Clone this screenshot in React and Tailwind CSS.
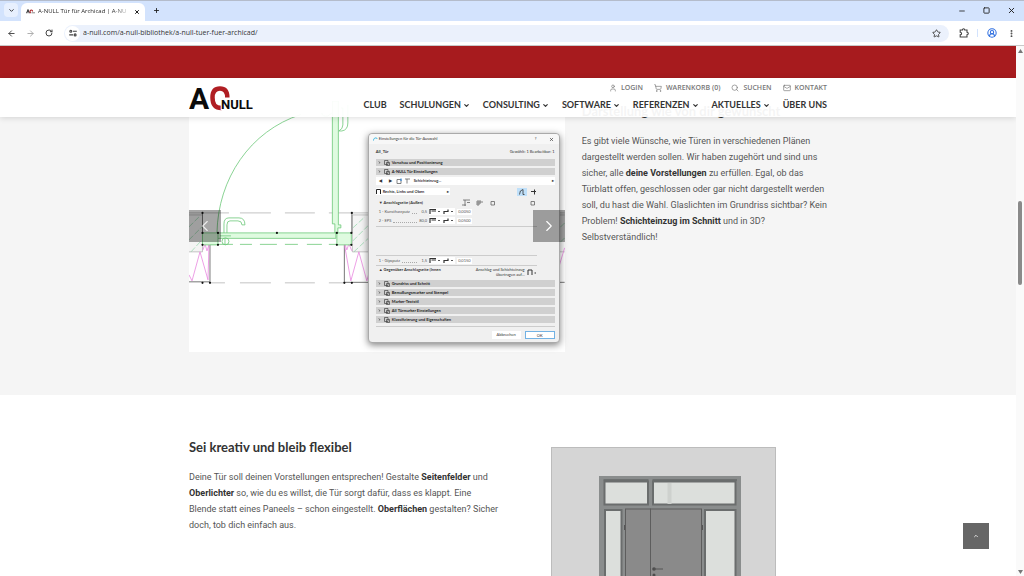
import {
  ArrowLeft,
  ArrowRight,
  ChevronDown,
  ChevronLeft,
  ChevronRight,
  ChevronUp,
  CircleUserRound,
  EllipsisVertical,
  Mail,
  Minus,
  Plus,
  RotateCw,
  Search,
  ShoppingCart,
  Square,
  Star,
  User,
  X,
} from "lucide-react";

const topLinks = [
  { label: "Login", icon: User },
  { label: "Warenkorb (0)", icon: ShoppingCart },
  { label: "Suchen", icon: Search },
  { label: "Kontakt", icon: Mail },
];

const mainLinks = [
  { label: "Club" },
  { label: "Schulungen", menu: true },
  { label: "Consulting", menu: true },
  { label: "Software", menu: true },
  { label: "Referenzen", menu: true },
  { label: "Aktuelles", menu: true },
  { label: "Über uns" },
];

const lowerPanels = [
  "Grundriss und Schnitt",
  "Bemaßungsmarker und Stempel",
  "Marker-Textstil",
  "AII Türmarker Einstellungen",
  "Klassifizierung und Eigenschaften",
];

function TabStrip() {
  return (
    <div className="flex h-[21px] items-end border-t border-[#b4bccb] bg-[#d3e3fd] pl-1 text-[#1f1f1f]">
      <button
        aria-label="Tabs durchsuchen"
        className="mb-1 flex h-3.5 w-3.5 items-center justify-center rounded bg-[#e8f0fe]"
      >
        <ChevronDown size={7} strokeWidth={3} />
      </button>
      <div className="ml-[3px] flex h-[18px] w-[124px] items-center rounded-t-md bg-white pr-1.5 pb-px pl-[5px]">
        <svg width="9" height="5" viewBox="0 0 9 5" className="shrink-0">
          <path d="M0.6 4.2 2 0.9 3.4 4.2" stroke="#333" strokeWidth="1.1" fill="none" />
          <path d="M4.6 4.2C3.6 3 3.9 1 5.2 1S6.6 2 6.6 2.6" stroke="#a71c20" strokeWidth="1.1" fill="none" />
          <path d="M5.5 3.8H9" stroke="#888" strokeWidth="1" />
        </svg>
        <span className="ml-[3px] flex-1 bg-gradient-to-r from-[#1f1f1f] from-85% to-[#1f1f1f]/30 bg-clip-text text-[6px] whitespace-nowrap text-transparent">
          A-NULL Tür für Archicad | A-NU
        </span>
        <button aria-label="Tab schließen" className="ml-2">
          <X size={6} strokeWidth={4} />
        </button>
      </div>
      <button aria-label="Neuer Tab" className="mb-[7px] ml-2">
        <Plus size={7} strokeWidth={3} />
      </button>
      <div className="mr-2 mb-[6px] ml-auto flex items-center gap-[17px]">
        <button aria-label="Minimieren">
          <Minus size={8} strokeWidth={2.5} />
        </button>
        <button aria-label="Maximieren">
          <Square size={7} strokeWidth={3} />
        </button>
        <button aria-label="Schließen">
          <X size={9} strokeWidth={2.5} />
        </button>
      </div>
    </div>
  );
}

function Toolbar() {
  return (
    <div className="flex h-[25px] items-center border-b border-[#c9c9c9] bg-white pr-2 pl-[7px] text-[#444]">
      <button aria-label="Zurück">
        <ArrowLeft size={9} strokeWidth={2.5} />
      </button>
      <button aria-label="Vor" className="ml-2.5 text-[#aaa]">
        <ArrowRight size={9} strokeWidth={2.5} />
      </button>
      <button aria-label="Neu laden" className="ml-2.5">
        <RotateCw size={8} strokeWidth={3} />
      </button>
      <div className="ml-[11px] flex h-[17px] flex-1 items-center rounded-full bg-[#ebf1fc] pr-2">
        <div className="ml-px flex h-[15px] w-[15px] items-center justify-center rounded-full bg-white">
          <svg width="8" height="8" viewBox="0 0 8 8" fill="none" stroke="#444" strokeWidth="1.1">
            <circle cx="1.8" cy="2.2" r="1" />
            <path d="M4 2.2h3.8M0.2 5.9H4" />
            <circle cx="6.1" cy="5.9" r="1" />
          </svg>
        </div>
        <input
          aria-label="Adresse"
          readOnly
          value="a-null.com/a-null-bibliothek/a-null-tuer-fuer-archicad/"
          className="ml-[3px] flex-1 bg-transparent text-[7px] text-[#333] outline-none"
        />
        <button aria-label="Lesezeichen">
          <Star size={9} strokeWidth={2.5} />
        </button>
      </div>
      <button aria-label="Erweiterungen" className="ml-2.5">
        <svg width="10" height="10" viewBox="0 0 10 10" fill="none" stroke="currentColor" strokeWidth="1.1">
          <path d="M1.200 2H3.500Q3.500 0.800 4.600 0.800T5.700 2H8V4.300Q9.300 4.300 9.300 5.500T8 6.700V9H1.200V6.800Q2.600 6.800 2.600 5.500T1.200 4.200Z" />
        </svg>
      </button>
      <div className="mx-2 h-2 w-px bg-[#d3e3fd]" />
      <button aria-label="Profil" className="ml-px text-[#2f6fe0]">
        <CircleUserRound size={10} strokeWidth={2.5} />
      </button>
      <button aria-label="Menü" className="ml-2.5">
        <EllipsisVertical size={9} strokeWidth={3} />
      </button>
    </div>
  );
}

function Logo() {
  return (
    <a href="#start" aria-label="A-NULL">
      <svg width="66" height="39" viewBox="0 -7 66 39">
        <text x="0" y="24" fontSize="30" fontWeight="700" fill="#0b0b0b" className="font-[Roboto,sans-serif]">
          A
        </text>
        <path
          d="M32.5 23C26 23 23.5 19.5 23.5 12.500C23.500 6.500 26 3.500 31 3.500S38.300 6.500 38.300 12.500"
          fill="none"
          stroke="#b01e23"
          strokeWidth="4.500"
        />
        <text
          x="32"
          y="24"
          fontSize="13"
          fontWeight="700"
          fill="#0b0b0b"
          stroke="#fff"
          strokeWidth="2"
          paintOrder="stroke"
          className="font-[Roboto,sans-serif]"
        >
          NULL
        </text>
      </svg>
    </a>
  );
}

function SiteHeader() {
  return (
    <header className="relative z-10 bg-white/95 shadow-[0_1px_6px_rgba(0,0,0,0.14)]">
      <div className="mx-auto flex h-[39px] max-w-[638px] justify-between">
        <Logo />
        <div className="flex flex-col items-end pt-[5px]">
          <nav className="flex gap-[11px]">
            {topLinks.map(({ label, icon: Icon }) => (
              <a
                key={label}
                href="#service"
                className="flex items-center gap-1 text-[7px] leading-[10px] font-semibold text-[#777] uppercase"
              >
                <Icon size={8} strokeWidth={2} />
                {label}
              </a>
            ))}
          </nav>
          <nav className="mt-[6px] flex gap-[13px] font-[Lato,sans-serif]">
            {mainLinks.map(({ label, menu }) => (
              <a
                key={label}
                href="#menu"
                className="flex items-center text-[9px] leading-3 font-bold text-[#333] uppercase"
              >
                {label}
                {menu && <ChevronDown size={7} strokeWidth={4} className="ml-0.5" />}
              </a>
            ))}
          </nav>
        </div>
      </div>
    </header>
  );
}

function FloorPlan() {
  return (
    <svg viewBox="0 -4 376 251" className="block h-auto w-full bg-white" fill="none">
      {/* walls */}
      <g stroke="#b5b5b5" strokeWidth="0.8">
        <path d="M0 108H40M51 108H82M96 108H126M140 108H163M163 108H376" />
        <path d="M21 178H36M51 178H82M96 178H126M140 178H156" />
        <path d="M0 110H13.500V147H0M376 110H163.500V147H376" fill="#f4f4f4" />
      </g>
      <path
        d="M0 122 10 112M0 135 13 122M2 147 13 135M164 123 176 112M164 136 184 116M165 147 180 133M366 128 376 118M366 143 376 133"
        stroke="#8fd6a8"
        strokeWidth="0.7"
        strokeDasharray="6 2"
      />
      <g stroke="#777" strokeWidth="1">
        <path d="M0 177H21M21 140V178M155.500 140V178M155 177.500H376M13.500 108V128M163 108V128" />
      </g>
      <path
        d="M0 170 3 176 11 147 19 175 20 140 18 146 16 139 14 145M155.500 139 162 176 170 147 178 176 186 147M366 176 376 143M156 139 158 145 160 139 163 146"
        stroke="#e888e0"
        strokeWidth="0.8"
      />
      {/* door leaf, open and closed */}
      <g stroke="#6cc878" strokeWidth="0.8">
        <path d="M28 128C29 74 61 26 112 9.500" />
        <path d="M21 139.500H44M51 139.500H63M71 139.500H88M96 139.500H109M118 139.500H133M140 139.500H150" />
        <g fill="#dffbe0">
          <path d="M143.500-4H149.500V120H152V123H149V128H146V119H143.500Z" />
          <path d="M28 128H147V133.500H28Z" />
          <path d="M13.500 128H29V140H13.500ZM148 128H162.500V140H148Z" />
        </g>
        <path d="M35 128V119Q35 113 40 113H50Q56 113 56 120H53Q53 116 49 116H41Q38 116 38 120V128M31 131H42M36 134V140" />
        <circle cx="36.500" cy="136.500" r="3.500" />
        <path d="M133 8Q133 12 139 11L143 8M152 3H154V20Q154 24 150 26H153Q159 25 159 18V0" />
      </g>
      <g fill="#111">
        {[
          [13.5, 108], [163, 108], [13.5, 128], [29, 128], [88, 128], [148, 128], [162.5, 128],
          [13.5, 140], [29, 140], [148, 140], [162.5, 140], [13.5, 178], [21, 178], [155.5, 178], [163, 178],
        ].map(([x, y]) => (
          <circle key={`${x}-${y}`} cx={x} cy={y} r="1.1" />
        ))}
      </g>
    </svg>
  );
}

function PanelBar({ title }) {
  return (
    <button className="flex h-[7px] w-full items-center bg-[#d0d0d0] text-left font-bold text-[#222]">
      <ChevronRight size={3} strokeWidth={5} className="ml-0.5" />
      <svg width="6" height="6" viewBox="0 0 6 6" fill="none" stroke="#444" strokeWidth="0.7" className="mr-0.5 ml-[3px]">
        <path d="M0.500 0.500H4V4.500H0.500ZM2.500 2.500H5.500V5.500H2.500Z" />
      </svg>
      {title}
    </button>
  );
}

function LayerRow({ name, width, value }) {
  return (
    <div className="flex h-[9px] items-center text-[#555]">
      <span className="ml-[3px]">{name}</span>
      <span className="mx-0.5 h-1 flex-1 border-b border-dotted border-[#aaa]" />
      <span className="w-2 text-right">{width}</span>
      <svg width="26" height="7" viewBox="0 0 26 7" fill="none" className="ml-0.5 bg-white">
        <path d="M1 6V1.500H7M2.500 3H7M15 6V3.500H19V1.500" stroke="#333" strokeWidth="1.200" />
        <path d="M9 3.500h2M22 3.500h2" stroke="#555" />
      </svg>
      <span className="ml-0.5 bg-white px-px">{value}</span>
      <span className="w-[83px]" />
    </div>
  );
}

function DoorDialog() {
  return (
    <div className="absolute top-[32px] right-[5px] w-48 rounded border border-[#aaa] bg-[#f0f0f0] pr-1 pb-[3px] pl-[7px] font-[Lato,sans-serif] text-[4px] leading-[6px] text-[#333] shadow-[0_2px_7px_rgba(0,0,0,0.5)]">
      <div className="-mr-1 -ml-[7px] flex h-2.5 items-center rounded-t bg-[#f7f7f7] px-1">
        <svg width="5" height="4" viewBox="0 0 5 4" fill="none" stroke="#36b3dd" className="mr-px">
          <path d="M0.500 3.500C0.500 1 3 0 4.500 2" />
        </svg>
        Einstellungen für die Tür-Auswahl
        <span className="ml-auto">?</span>
        <X size={5} strokeWidth={3} className="mr-px ml-3" />
      </div>
      <div className="flex h-[15px] items-center justify-between">
        <span className="font-bold">AII_Tür</span>
        <span>Gewählt: 1 Bearbeitbar: 1</span>
      </div>
      <div className="flex flex-col gap-0.5">
        <PanelBar title="Vorschau und Positionierung" />
        <PanelBar title="A-NULL Tür Einstellungen" />
      </div>
      <div className="mt-0.5 flex h-[8px] items-center bg-white font-bold">
        <span className="w-2.5 text-center">◀</span>
        <span className="w-2.5 text-center">▶</span>
        <svg width="16" height="6" viewBox="0 0 16 6" fill="none" stroke="#666" strokeWidth="0.8" className="mr-0.5">
          <path d="M1 1.500H5V5.500H1ZM9 1H14M11 1V5.500" />
          <path d="M5 0.500V3" stroke="#2c86dc" strokeWidth="1.200" />
        </svg>
        Schichteinzug...
        <span className="mr-px ml-auto">▸</span>
      </div>
      <div className="mt-[3px] flex h-[7px] items-center font-bold">
        <span className="flex h-full w-[74px] items-center bg-white">
          <svg width="5" height="5" viewBox="0 0 5 5" fill="none" stroke="#222" className="mr-0.5">
            <path d="M0.500 5V0.500H4.500V5" />
          </svg>
          Rechts, Links und Oben
          <span className="mr-px ml-auto">▸</span>
        </span>
        <span className="mr-[18px] ml-auto flex h-2 items-center gap-1">
          <svg width="10" height="8" viewBox="0 0 10 8" fill="none" stroke="#333" strokeWidth="0.8" className="bg-[#bfe0fa]">
            <path d="M2.500 6.500Q2.500 2 6 1.500V6.500H7.500" />
          </svg>
          <svg width="6" height="6" viewBox="0 0 6 6" fill="none" stroke="#333">
            <path d="M0 2.500H5M3.500 0.500V5.500" />
          </svg>
        </span>
      </div>
      <div className="mt-[3px] flex h-[9px] items-center font-bold">
        <span className="ml-[3px]">▼ Anschlagseite (Außen)</span>
        <svg width="76" height="8" viewBox="0 0 76 8" fill="none" stroke="#666" strokeWidth="0.8" className="mr-[18px] ml-auto">
          <path d="M2 1H9M4 1V7M1 6H5M6 3.500H9M15 3H22M17 1V7M19 1V5H15M70 2.500H73.500V6H70ZM30 2.500H33.500V6H30Z" />
        </svg>
      </div>
      <LayerRow name="1 - Kunstharzputz" width="0,5" value="0,0050" />
      <LayerRow name="2 - EPS" width="80,0" value="0,0500" />
      <div className="mt-px mr-[18px] h-[30px] border-y border-[#ccc]" />
      <LayerRow name="1 - Gipsputz" width="1,5" value="0,0150" />
      <div className="mr-[18px] border-t border-[#ccc]" />
      <div className="mb-[3px] flex h-[11px] items-start justify-between pt-px">
        <span className="ml-[3px] font-bold">▲ Gegenüber Anschlagseite (Innen</span>
        <span className="mr-[18px] flex items-center gap-0.5 text-right leading-[5px]">
          <span>
            Anschlag und Schichteinzug
            <br />
            übertragen auf...
          </span>
          <svg width="10" height="6" viewBox="0 0 10 6" fill="none" stroke="#333">
            <path d="M1 6V1H5V6M7.500 4H9" />
          </svg>
        </span>
      </div>
      <div className="flex flex-col gap-0.5">
        {lowerPanels.map((title) => (
          <PanelBar key={title} title={title} />
        ))}
      </div>
      <div className="mt-[3px] flex justify-end gap-1 border-t border-[#ccc] pt-1">
        <button className="h-2 w-[29px] bg-white">Abbrechen</button>
        <button className="h-2 w-[30px] border border-[#72b2e4] bg-white leading-[5px]">OK</button>
      </div>
    </div>
  );
}

function Slider() {
  return (
    <div className="relative">
      <FloorPlan />
      <DoorDialog />
      <button
        aria-label="Vorheriges Bild"
        className="absolute top-1/2 left-0 flex h-8 w-8 -translate-y-1/2 items-center justify-center bg-black/35 text-white/80"
      >
        <ChevronLeft size={18} strokeWidth={1.5} />
      </button>
      <button
        aria-label="Nächstes Bild"
        className="absolute top-1/2 right-0 flex h-8 w-8 -translate-y-1/2 items-center justify-center bg-black/35 text-white"
      >
        <ChevronRight size={18} strokeWidth={1.5} />
      </button>
    </div>
  );
}

function DoorElevation() {
  return (
    <svg viewBox="0 0 225 225" className="block w-[225px]">
      <rect x="0.500" y="0.500" width="224" height="224" fill="#d5d5d5" stroke="#bcbcbc" />
      <rect x="48" y="29" width="142" height="196" fill="#8a8d8d" />
      <g fill="#dcdfdc" stroke="#6a6d6d" strokeWidth="2">
        <path d="M53.500 34.500H97V57.500H53.500ZM102 34.500H184.500V57.500H102Z" />
        <path d="M54 63H70.500V225H54ZM154 63H184.500V225H154Z" />
      </g>
      <path d="M52.500 33H97.500M101.500 33H186" stroke="#656868" strokeWidth="1.500" />
      <path d="M118.500 36V57" stroke="#ced1ce" strokeWidth="4" />
      <g fill="#8a8a8a" stroke="#5d5d5d">
        <rect x="74.500" y="62" width="25" height="163" />
        <rect x="99.500" y="62" width="51" height="163" />
      </g>
      <path d="M73.500 78V83M151.500 78V83" stroke="#555" />
      <circle cx="103" cy="122" r="1.800" fill="#4c4c4c" />
      <path d="M103 122H112" stroke="#555" />
      <circle cx="103" cy="128" r="1.500" fill="#4c4c4c" />
    </svg>
  );
}

function Scrollbar() {
  return (
    <div className="flex w-2 flex-col items-center bg-[#fafafa] pt-[3px] pb-[2px]">
      <svg width="5" height="4" viewBox="0 0 5 4" fill="#777">
        <path d="M2.500 0 5 4H0Z" />
      </svg>
      <div className="grow-[148]" />
      <div className="h-[84px] w-1 rounded-full bg-[#8a8a8a]" />
      <div className="grow-[284]" />
      <svg width="5" height="4" viewBox="0 0 5 4" fill="#777">
        <path d="M0 0H5L2.500 4Z" />
      </svg>
    </div>
  );
}

export default function App() {
  return (
    <div className="flex h-screen flex-col overflow-hidden bg-white font-['Open_Sans',sans-serif]">
      <TabStrip />
      <Toolbar />
      <div className="flex min-h-0 flex-1">
        <div className="relative min-w-0 flex-1 overflow-hidden">
          <div className="h-[32px] bg-[#a71b1e]" />
          <SiteHeader />
          <main className="font-[Roboto,sans-serif] text-[9px] leading-4 text-[#555] [&_b]:text-[#333]">
            <section className="-mt-4 bg-[#f5f5f5] pb-[43px]">
              <div className="mx-auto grid max-w-[638px] grid-cols-[376fr_245fr] gap-[17px]">
                <Slider />
                <div>
                  <h2 className="mb-3 font-[Lato,sans-serif] text-[13px] leading-5 font-bold whitespace-nowrap text-[#333]">
                    Darstellung wie von dir gewünscht
                  </h2>
                  <p className="whitespace-nowrap">
                    Es gibt viele Wünsche, wie Türen in verschiedenen Plänen
                    <br />
                    dargestellt werden sollen. Wir haben zugehört und sind uns
                    <br />
                    sicher, alle <b>deine Vorstellungen</b> zu erfüllen. Egal, ob das
                    <br />
                    Türblatt offen, geschlossen oder gar nicht dargestellt werden
                    <br />
                    soll, du hast die Wahl. Glaslichten im Grundriss sichtbar? Kein
                    <br />
                    Problem! <b>Schichteinzug im Schnitt</b> und in 3D?
                    <br />
                    Selbstverständlich!
                  </p>
                </div>
              </div>
            </section>
            <section className="bg-white pt-[42px]">
              <div className="mx-auto grid max-w-[638px] grid-cols-[311fr_327fr]">
                <div>
                  <h2 className="mb-3 font-[Lato,sans-serif] text-[13px] leading-5 font-bold text-[#333]">
                    Sei kreativ und bleib flexibel
                  </h2>
                  <p className="whitespace-nowrap">
                    Deine Tür soll deinen Vorstellungen entsprechen! Gestalte <b>Seitenfelder</b> und
                    <br />
                    <b>Oberlichter</b> so, wie du es willst, die Tür sorgt dafür, dass es klappt. Eine
                    <br />
                    Blende statt eines Paneels – schon eingestellt. <b>Oberflächen</b> gestalten? Sicher
                    <br />
                    doch, tob dich einfach aus.
                  </p>
                </div>
                <div className="flex justify-center pt-[10px]">
                  <DoorElevation />
                </div>
              </div>
            </section>
          </main>
          <a
            href="#start"
            aria-label="Nach oben"
            className="absolute right-[27px] bottom-[27px] flex h-[26px] w-[26px] items-center justify-center bg-[#666] text-white"
          >
            <ChevronUp size={6} strokeWidth={3} />
          </a>
        </div>
        <Scrollbar />
      </div>
    </div>
  );
}
